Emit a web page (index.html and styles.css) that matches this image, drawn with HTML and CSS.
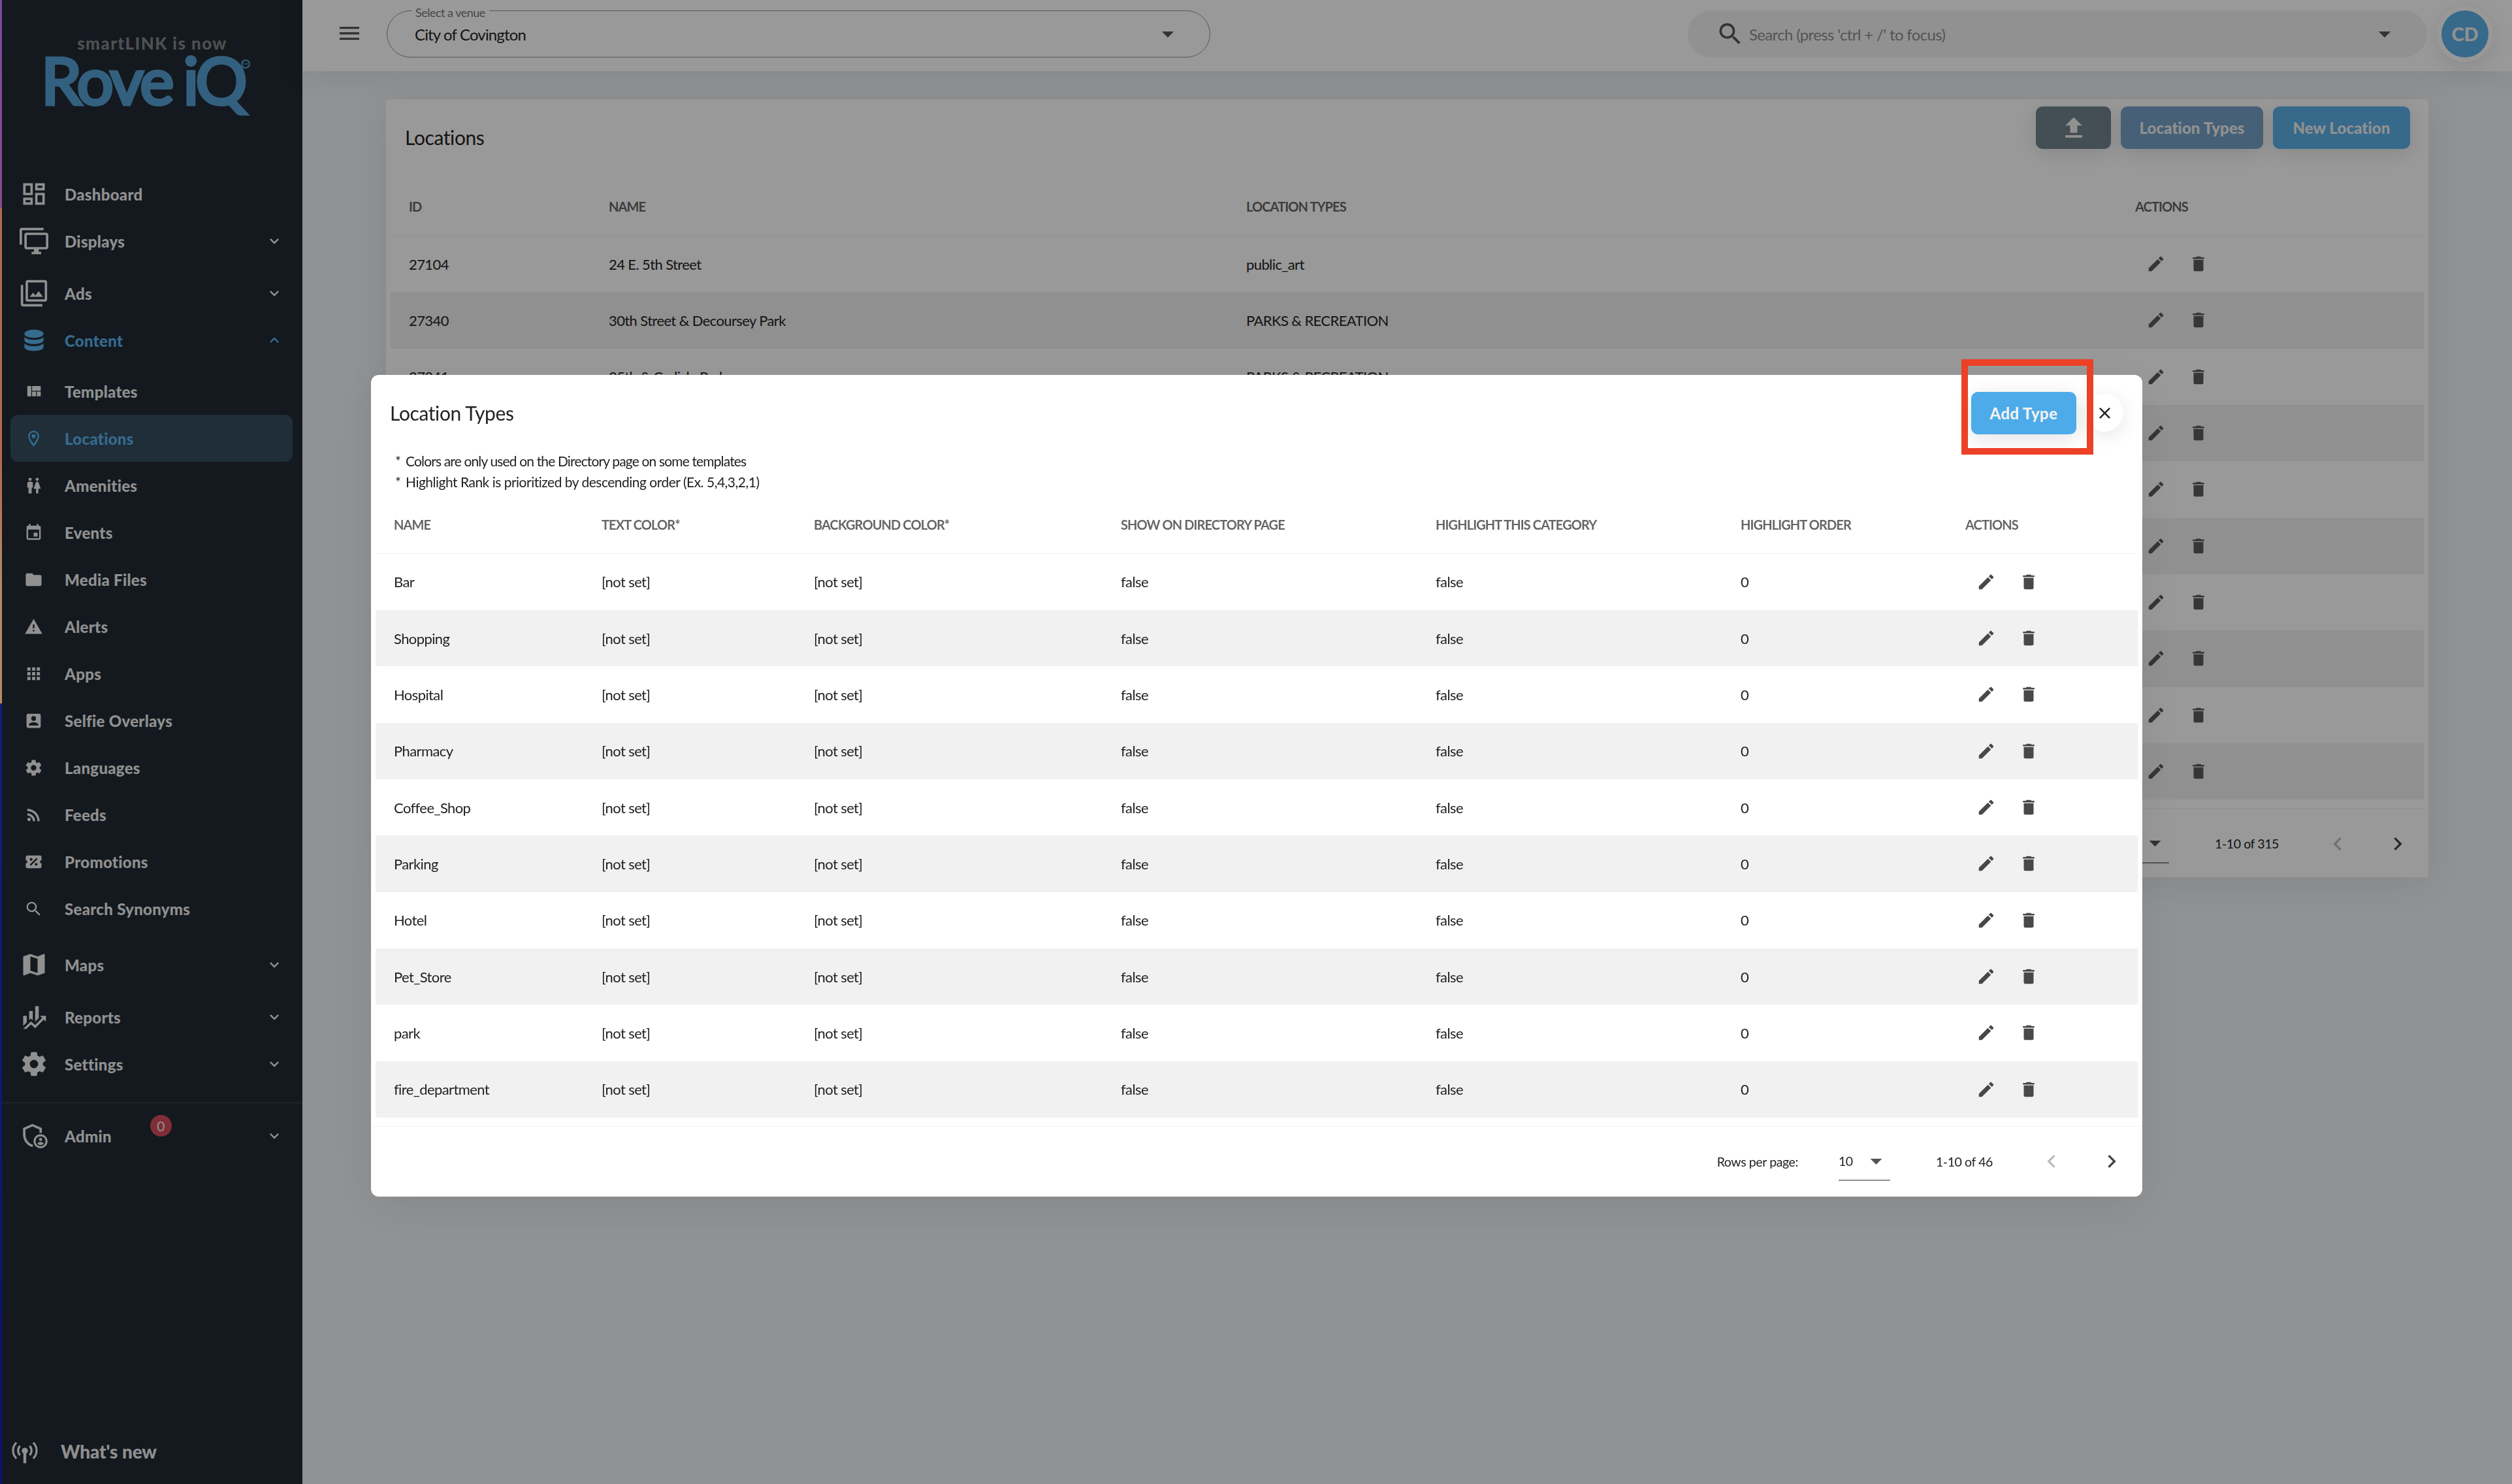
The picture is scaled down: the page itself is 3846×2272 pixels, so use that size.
FILE: index.html
```html
<!DOCTYPE html>
<html lang="en">
<head>
    <meta charset="UTF-8">
    <meta name="viewport" content="width=device-width, initial-scale=1.0">
    <title>Locations</title>
    <link rel="stylesheet" href="styles.css">
</head>
<body>
    <!-- icon sprite -->
    <svg class="sprite" width="0" height="0">
        <symbol id="i-dashboard" viewBox="0 0 24 24"><path d="M19 5v2h-4V5h4M9 5v6H5V5h4m10 8v6h-4v-6h4M9 17v2H5v-2h4M21 3h-8v6h8V3zM11 3H3v10h8V3zm10 8h-8v10h8V11zm-10 4H3v6h8v-6z"/></symbol>
        <symbol id="i-displays" viewBox="0 0 24 24"><path d="M22,17V7H6V17H22M22,5A2,2 0 0,1 24,7V17C24,18.11 23.1,19 22,19H16V21H18V23H10V21H12V19H6C4.89,19 4,18.11 4,17V7A2,2 0 0,1 6,5H22M2,3V15H0V3A2,2 0 0,1 2,1H20V3H2Z"/></symbol>
        <symbol id="i-ads" viewBox="0 0 24 24"><path d="M21,17H7V3H21M21,1H7A2,2 0 0,0 5,3V17A2,2 0 0,0 7,19H21A2,2 0 0,0 23,17V3A2,2 0 0,0 21,1M3,5H1V21A2,2 0 0,0 3,23H19V21H3M15.96,10.29L13.21,13.83L11.25,11.47L8.5,15H19.5L15.96,10.29Z"/></symbol>
        <symbol id="i-content" viewBox="0 0 24 24"><path d="M4 6.6C4 4.5 7.6 3.1 12 3.1s8 1.400 8 3.500S16.400 10 12 10 4 8.700 4 6.600zM4 9.300c1.700 1.600 4.700 2.300 8 2.300s6.300-.7 8-2.300v2.500c0 2-3.600 3.300-8 3.300s-8-1.300-8-3.300zM4 14.600c1.700 1.600 4.700 2.300 8 2.300s6.300-.7 8-2.300v3c0 2-3.600 3.300-8 3.300s-8-1.300-8-3.300z"/></symbol>
        <symbol id="i-templates" viewBox="0 0 24 24"><path d="M10,5V11H21V5M16,18H21V12H16M4,18H9V5H4M10,18H15V12H10V18Z"/></symbol>
        <symbol id="i-locations" viewBox="0 0 24 24"><path d="M12,6.5A2.5,2.5 0 0,1 14.5,9A2.5,2.5 0 0,1 12,11.5A2.5,2.5 0 0,1 9.5,9A2.5,2.5 0 0,1 12,6.5M12,2A7,7 0 0,1 19,9C19,14.25 12,22 12,22C12,22 5,14.25 5,9A7,7 0 0,1 12,2M12,4A5,5 0 0,0 7,9C7,10 7,12 12,18.71C17,12 17,10 17,9A5,5 0 0,0 12,4Z"/></symbol>
        <symbol id="i-amenities" viewBox="0 0 24 24"><path d="M7.5,2A2,2 0 0,1 9.5,4A2,2 0 0,1 7.5,6A2,2 0 0,1 5.5,4A2,2 0 0,1 7.5,2M6,7H9A2,2 0 0,1 11,9V14.5H9.5V22H5.5V14.5H4V9A2,2 0 0,1 6,7M16.5,2A2,2 0 0,1 18.5,4A2,2 0 0,1 16.5,6A2,2 0 0,1 14.5,4A2,2 0 0,1 16.5,2M15,22V16H12L14.59,8.41C14.84,7.59 15.6,7 16.5,7C17.4,7 18.16,7.59 18.41,8.41L21,16H18V22H15Z"/></symbol>
        <symbol id="i-events" viewBox="0 0 24 24"><path d="M19,19H5V8H19M16,1V3H8V1H6V3H5C3.89,3 3,3.89 3,5V19A2,2 0 0,0 5,21H19A2,2 0 0,0 21,19V5C21,3.89 20.1,3 19,3H18V1M17,12H12V17H17V12Z"/></symbol>
        <symbol id="i-media" viewBox="0 0 24 24"><path d="M10,4H4C2.89,4 2,4.89 2,6V18A2,2 0 0,0 4,20H20A2,2 0 0,0 22,18V8C22,6.89 21.1,6 20,6H12L10,4Z"/></symbol>
        <symbol id="i-alerts" viewBox="0 0 24 24"><path d="M13 14H11V9H13M13 18H11V16H13M1 21H23L12 2L1 21Z"/></symbol>
        <symbol id="i-apps" viewBox="0 0 24 24"><path d="M16,20H20V16H16M16,14H20V10H16M10,8H14V4H10M16,8H20V4H16M10,14H14V10H10M4,14H8V10H4M4,20H8V16H4M10,20H14V16H10M4,8H8V4H4V8Z"/></symbol>
        <symbol id="i-selfie" viewBox="0 0 24 24"><path d="M6,17C6,15 10,13.9 12,13.9C14,13.9 18,15 18,17V18H6M15,9A3,3 0 0,1 12,12A3,3 0 0,1 9,9A3,3 0 0,1 12,6A3,3 0 0,1 15,9M3,5V19A2,2 0 0,0 5,21H19A2,2 0 0,0 21,19V5A2,2 0 0,0 19,3H5C3.89,3 3,3.9 3,5Z"/></symbol>
        <symbol id="i-cog" viewBox="0 0 24 24"><path d="M12,15.5A3.5,3.5 0 0,1 8.5,12A3.5,3.5 0 0,1 12,8.5A3.5,3.5 0 0,1 15.5,12A3.5,3.5 0 0,1 12,15.5M19.43,12.97C19.47,12.65 19.5,12.33 19.5,12C19.5,11.67 19.47,11.34 19.43,11L21.54,9.37C21.73,9.22 21.78,8.95 21.66,8.73L19.66,5.27C19.54,5.05 19.27,4.96 19.05,5.05L16.56,6.05C16.04,5.66 15.5,5.32 14.87,5.07L14.5,2.42C14.46,2.18 14.25,2 14,2H10C9.75,2 9.54,2.18 9.5,2.42L9.13,5.07C8.5,5.32 7.96,5.66 7.44,6.05L4.95,5.05C4.73,4.96 4.46,5.05 4.34,5.27L2.34,8.73C2.21,8.95 2.27,9.22 2.46,9.37L4.57,11C4.53,11.34 4.5,11.67 4.5,12C4.5,12.33 4.53,12.65 4.57,12.97L2.46,14.63C2.27,14.78 2.21,15.05 2.34,15.27L4.34,18.73C4.46,18.95 4.73,19.03 4.95,18.95L7.44,17.94C7.96,18.34 8.5,18.68 9.13,18.93L9.5,21.58C9.54,21.82 9.75,22 10,22H14C14.25,22 14.46,21.82 14.5,21.58L14.87,18.93C15.5,18.67 16.04,18.34 16.56,17.94L19.05,18.95C19.27,19.03 19.54,18.95 19.66,18.73L21.66,15.27C21.78,15.05 21.73,14.78 21.54,14.63L19.43,12.97Z"/></symbol>
        <symbol id="i-feeds" viewBox="0 0 24 24"><path d="M6.18,15.64A2.18,2.18 0 0,1 8.36,17.82C8.36,19 7.38,20 6.18,20C5,20 4,19 4,17.82A2.18,2.18 0 0,1 6.18,15.64M4,4.44A15.56,15.56 0 0,1 19.56,20H16.73A12.73,12.73 0 0,0 4,7.27V4.44M4,10.1A9.9,9.9 0 0,1 13.9,20H11.07A7.07,7.07 0 0,0 4,12.93V10.1Z"/></symbol>
        <symbol id="i-promotions" viewBox="0 0 24 24"><path d="M4,4A2,2 0 0,0 2,6V10A2,2 0 0,1 4,12A2,2 0 0,1 2,14V18A2,2 0 0,0 4,20H20A2,2 0 0,0 22,18V14A2,2 0 0,1 20,12A2,2 0 0,1 22,10V6A2,2 0 0,0 20,4H4M15.5,7L17,8.5L8.5,17L7,15.5L15.5,7M8.81,7.04C9.79,7.04 10.58,7.83 10.58,8.81A1.77,1.77 0 0,1 8.81,10.58C7.83,10.58 7.04,9.79 7.04,8.81A1.77,1.77 0 0,1 8.81,7.04M15.19,13.42C16.17,13.42 16.96,14.21 16.96,15.19A1.77,1.77 0 0,1 15.19,16.96C14.21,16.96 13.42,16.17 13.42,15.19A1.77,1.77 0 0,1 15.19,13.42Z"/></symbol>
        <symbol id="i-search" viewBox="0 0 24 24"><path d="M9.5,3A6.5,6.5 0 0,1 16,9.5C16,11.11 15.41,12.59 14.44,13.73L14.71,14H15.5L20.5,19L19,20.5L14,15.5V14.71L13.73,14.44C12.59,15.41 11.11,16 9.5,16A6.5,6.5 0 0,1 3,9.5A6.5,6.5 0 0,1 9.5,3M9.5,5C7,5 5,7 5,9.5C5,12 7,14 9.5,14C12,14 14,12 14,9.5C14,7 12,5 9.5,5Z"/></symbol>
        <symbol id="i-maps" viewBox="0 0 24 24"><path d="M20.5 3l-.16.03L15 5.1 9 3 3.36 4.9c-.21.07-.36.25-.36.48V20.5c0 .28.22.5.5.5l.16-.03L9 18.900l6 2.100 5.640-1.900c.21-.07.36-.25.36-.48V3.500c0-.28-.22-.5-.5-.5zM15 19l-6-2.110V5l6 2.110V19z"/></symbol>
        <symbol id="i-reports" viewBox="0 0 24 24"><path d="M6,16.5L3,19.44V11H6M11,14.66L9.43,13.32L8,14.64V7H11M16,13L13,16V3H16M18.81,12.81L17,11H22V16L20.21,14.21L13,21.36L9.53,18.34L5.75,22H3L9.47,15.66L13,18.64"/></symbol>
        <symbol id="i-admin" viewBox="0 0 24 24"><path d="M17.600 9.500V6.100L10.700 3.100L3.900 6.100V10.800C3.900 15.300 6.600 19.200 11 20.400" fill="none" stroke="currentColor" stroke-width="2"/><circle cx="17.500" cy="16.500" r="5" fill="none" stroke="currentColor" stroke-width="1.700"/><circle cx="17.500" cy="15" r="1.300"/><path d="M14.800 18.400C15.500 17.400 16.500 17 17.500 17s2 .4 2.700 1.400C19.500 19.300 18.500 19.700 17.500 19.700s-2-.4-2.700-1.300z"/></symbol>
        <symbol id="i-news" viewBox="0 0 24 24"><circle cx="12" cy="11.500" r="2.800"/><path d="M10.700 12h2.600v11h-2.600z"/><path d="M7.600 7a6 6 0 0 0 0 8.500M16.400 7a6 6 0 0 1 0 8.500M4.300 4a10 10 0 0 0 0 14.500M19.700 4a10 10 0 0 1 0 14.500" fill="none" stroke="currentColor" stroke-width="1.900"/></symbol>
        <symbol id="i-chevron" viewBox="0 0 24 24"><path d="M7.41,8.58L12,13.17L16.59,8.58L18,10L12,16L6,10L7.41,8.58Z"/></symbol>
        <symbol id="i-left" viewBox="0 0 24 24"><path d="M15.41,16.58L10.83,12L15.41,7.41L14,6L8,12L14,18L15.41,16.58Z"/></symbol>
        <symbol id="i-right" viewBox="0 0 24 24"><path d="M8.59,16.58L13.17,12L8.59,7.41L10,6L16,12L10,18L8.59,16.58Z"/></symbol>
        <symbol id="i-arrow" viewBox="0 0 24 24"><path d="M7,10L12,15L17,10H7Z"/></symbol>
        <symbol id="i-menu" viewBox="0 0 24 24"><path d="M3,6H21V8H3V6M3,11H21V13H3V11M3,16H21V18H3V16Z"/></symbol>
        <symbol id="i-upload" viewBox="0 0 24 24"><path d="M9,16V10H5L12,3L19,10H15V16H9M5,20V18H19V20H5Z"/></symbol>
        <symbol id="i-close" viewBox="0 0 24 24"><path d="M19,6.41L17.59,5L12,10.59L6.41,5L5,6.41L10.59,12L5,17.59L6.41,19L12,13.41L17.59,19L19,17.59L13.41,12L19,6.41Z"/></symbol>
        <symbol id="i-pencil" viewBox="0 0 24 24"><path d="M20.71,7.04C21.1,6.65 21.1,6 20.71,5.63L18.37,3.29C18,2.9 17.35,2.9 16.96,3.29L15.12,5.12L18.87,8.87M3,17.25V21H6.75L17.81,9.93L14.06,6.18L3,17.25Z"/></symbol>
        <symbol id="i-delete" viewBox="0 0 24 24"><path d="M19,4H15.5L14.5,3H9.5L8.5,4H5V6H19M6,19A2,2 0 0,0 8,21H16A2,2 0 0,0 18,19V7H6V19Z"/></symbol>
    </svg>

    <div class="app">
        <div class="edge"></div>

        <aside class="sidebar">
            <div class="logo">
                <div class="logo-note">smartLINK is now</div>
                <div class="logo-name">Rove<span class="logo-iq">iQ</span><sup>TM</sup></div>
            </div>
            <nav class="nav">
                <a class="item"><svg><use href="#i-dashboard"/></svg><span>Dashboard</span></a>
                <a class="item"><svg><use href="#i-displays"/></svg><span>Displays</span><svg class="chev"><use href="#i-chevron"/></svg></a>
                <a class="item gap"><svg><use href="#i-ads"/></svg><span>Ads</span><svg class="chev"><use href="#i-chevron"/></svg></a>
                <a class="item open"><svg><use href="#i-content"/></svg><span>Content</span><svg class="chev"><use href="#i-chevron"/></svg></a>
                <div class="sub">
                    <a class="item"><svg><use href="#i-templates"/></svg><span>Templates</span></a>
                    <a class="item active"><svg><use href="#i-locations"/></svg><span>Locations</span></a>
                    <a class="item"><svg><use href="#i-amenities"/></svg><span>Amenities</span></a>
                    <a class="item"><svg><use href="#i-events"/></svg><span>Events</span></a>
                    <a class="item"><svg><use href="#i-media"/></svg><span>Media Files</span></a>
                    <a class="item"><svg><use href="#i-alerts"/></svg><span>Alerts</span></a>
                    <a class="item"><svg><use href="#i-apps"/></svg><span>Apps</span></a>
                    <a class="item"><svg><use href="#i-selfie"/></svg><span>Selfie Overlays</span></a>
                    <a class="item"><svg><use href="#i-cog"/></svg><span>Languages</span></a>
                    <a class="item"><svg><use href="#i-feeds"/></svg><span>Feeds</span></a>
                    <a class="item"><svg><use href="#i-promotions"/></svg><span>Promotions</span></a>
                    <a class="item"><svg><use href="#i-search"/></svg><span>Search Synonyms</span></a>
                </div>
                <a class="item"><svg><use href="#i-maps"/></svg><span>Maps</span><svg class="chev"><use href="#i-chevron"/></svg></a>
                <a class="item gap"><svg><use href="#i-reports"/></svg><span>Reports</span><svg class="chev"><use href="#i-chevron"/></svg></a>
                <a class="item"><svg><use href="#i-cog"/></svg><span>Settings</span><svg class="chev"><use href="#i-chevron"/></svg></a>
                <div class="divider"></div>
                <a class="item"><svg><use href="#i-admin"/></svg><span>Admin</span><b class="badge">0</b><svg class="chev"><use href="#i-chevron"/></svg></a>
            </nav>
            <a class="news"><svg><use href="#i-news"/></svg><span>What's new</span></a>
        </aside>

        <div class="main">
            <header class="topbar">
                <svg class="menu"><use href="#i-menu"/></svg>
                <div class="venue">
                    <label>Select a venue</label>
                    <span>City of Covington</span>
                    <svg><use href="#i-arrow"/></svg>
                </div>
                <div class="search">
                    <svg class="glass"><use href="#i-search"/></svg>
                    <span>Search (press 'ctrl + /' to focus)</span>
                    <svg class="arrow"><use href="#i-arrow"/></svg>
                </div>
                <div class="avatar">CD</div>
            </header>

            <section class="card">
                <div class="card-head">
                    <h2>Locations</h2>
                    <button class="btn btn-upload"><svg><use href="#i-upload"/></svg></button>
                    <button class="btn btn-types">Location Types</button>
                    <button class="btn btn-new">New Location</button>
                </div>
                <div class="table locations">
                    <div class="row head"><span>ID</span><span>NAME</span><span>LOCATION TYPES</span><span>ACTIONS</span></div>
                    <div id="locationRows"></div>
                </div>
                <div class="pager">
                    <span class="rpp">Rows per page:</span>
                    <div class="size"><span>10</span><svg><use href="#i-arrow"/></svg></div>
                    <span class="range">1-10 of 315</span>
                    <svg class="prev"><use href="#i-left"/></svg>
                    <svg class="next"><use href="#i-right"/></svg>
                </div>
            </section>
        </div>
    </div>

    <div class="overlay">
        <div class="modal">
            <div class="modal-head">
                <h2>Location Types</h2>
                <div class="add-wrap">
                    <button class="btn btn-add">Add Type</button>
                    <div class="marker"></div>
                </div>
                <button class="close"><svg><use href="#i-close"/></svg></button>
            </div>
            <div class="notes">
                <p class="note-colors"><i>*</i>Colors are only used on the Directory page on some templates</p>
                <p><i>*</i>Highlight Rank is prioritized by descending order (Ex. 5,4,3,2,1)</p>
            </div>
            <div class="table types">
                <div class="row head"><span>NAME</span><span>TEXT COLOR*</span><span>BACKGROUND COLOR*</span><span>SHOW ON DIRECTORY PAGE</span><span>HIGHLIGHT THIS CATEGORY</span><span>HIGHLIGHT ORDER</span><span>ACTIONS</span></div>
                <div id="typeRows"></div>
            </div>
            <div class="pager">
                <span class="rpp">Rows per page:</span>
                <div class="size"><span>10</span><svg><use href="#i-arrow"/></svg></div>
                <span class="range">1-10 of 46</span>
                <svg class="prev"><use href="#i-left"/></svg>
                <svg class="next"><use href="#i-right"/></svg>
            </div>
        </div>
    </div>

    <script src="app.js"></script>
</body>
</html>
```

FILE: app.js
```js
const locations = [
    ['27104', '24 E. 5th Street', 'public_art'],
    ['27340', '30th Street & Decoursey Park', 'PARKS & RECREATION'],
    ['27341', '35th & Carlisle Park', 'PARKS & RECREATION'],
    ['', '', ''],
    ['', '', ''],
    ['', '', ''],
    ['', '', ''],
    ['', '', ''],
    ['', '', ''],
    ['', '', '']
];

const types = ['Bar', 'Shopping', 'Hospital', 'Pharmacy', 'Coffee_Shop', 'Parking', 'Hotel', 'Pet_Store', 'park', 'fire_department'];

const actions = '<span class="actions"><svg><use href="#i-pencil"/></svg><svg><use href="#i-delete"/></svg></span>';

function renderRows(id, rows) {
    document.getElementById(id).innerHTML = rows.map(function(cells) {
        return '<div class="row">' + cells.map(function(text) {
            return '<span>' + text.replace('&', '&amp;') + '</span>';
        }).join('') + actions + '</div>';
    }).join('');
}

renderRows('locationRows', locations);
renderRows('typeRows', types.map(function(name) {
    return [name, '[not set]', '[not set]', 'false', 'false', '0'];
}));
```

FILE: styles.css
```css
* {
    box-sizing: border-box;
}

body {
    margin: 0;
    font-family: Lato, "Liberation Sans", sans-serif;
    font-size: 22px;
    color: #222;
    background-color: #f1f3f6;
    overflow: hidden;
}

svg {
    fill: currentColor;
    flex: none;
    display: block;
}

.sprite {
    position: absolute;
}

h2, p {
    margin: 0;
    font-weight: 400;
}

h2 {
    font-size: 30px;
    letter-spacing: -0.4px;
}

.app {
    display: flex;
    height: 2272px;
}

/* desktop showing past the window's left side */
.edge {
    width: 3px;
    background: linear-gradient(#7b4a9c 0, #8a4a90 319px, #b4694f 319px, #b4694f 700px, #b78b60 900px, #b78b60 1077px, #10207c 1077px, #0b1070 100%);
}

/* sidebar */
.sidebar {
    width: 460px;
    background-color: #212a34;
    color: #f0f0f0;
    display: flex;
    flex-direction: column;
}

.logo {
    height: 261px;
    padding-top: 49px;
    text-align: center;
}

.logo-note {
    font-size: 26px;
    line-height: 34px;
    font-weight: 900;
    letter-spacing: 1.4px;
    color: #858688;
}

.logo-name {
    font-size: 99px;
    line-height: 78px;
    padding-left: 60px;
    text-align: left;
    letter-spacing: -4px;
    white-space: nowrap;
    color: #58a0d4;
    -webkit-text-stroke: 5px #58a0d4;
}

.logo-iq {
    margin-left: 18px;
}

.logo-name sup {
    display: inline-block;
    width: 14px;
    height: 14px;
    margin-left: -6px;
    border: 2px solid #58a0d4;
    border-radius: 50%;
    font-size: 6px;
    line-height: 10px;
    letter-spacing: 0;
    text-align: center;
    vertical-align: 60px;
    -webkit-text-stroke: 0;
}

.nav {
    flex: 1;
}

.item {
    height: 72px;
    display: flex;
    align-items: center;
    font-size: 24px;
    font-weight: 900;
    letter-spacing: 0.3px;
}

.item span {
    padding-left: 25px;
}

.item svg {
    width: 44px;
    height: 44px;
    margin-left: 27px;
}

.item .chev {
    width: 28px;
    height: 28px;
    margin: 0 29px 0 auto;
}

.gap {
    margin-top: 8px;
}

.open,
.active {
    color: #5cb2ee;
}

.open .chev {
    transform: rotate(180deg);
}

.sub {
    margin: 6px 15px 14px 13px;
}

.sub svg {
    width: 29px;
    height: 29px;
    margin-left: 21px;
}

.sub span {
    padding-left: 33px;
}

.active {
    background-color: #344d5f;
    border-radius: 12px;
}

.divider {
    height: 1px;
    margin: 23px 0 14px;
    background-color: #444b54;
}

.badge {
    width: 33px;
    height: 33px;
    margin: -31px 0 0 59px;
    border-radius: 50%;
    background-color: #d74b5d;
    font-size: 21px;
    line-height: 33px;
    font-weight: 400;
    text-align: center;
}

.news {
    height: 100px;
    display: flex;
    align-items: center;
    font-size: 28px;
    font-weight: 900;
    letter-spacing: -0.1px;
}

.news svg {
    width: 40px;
    height: 40px;
    margin: 0 35px 0 15px;
}

/* top bar */
.main {
    flex: 1;
}

.topbar {
    height: 109px;
    padding: 16px 36px 21px 50px;
    display: flex;
    background-color: #fff;
    box-shadow: 0 8px 48px rgba(0, 0, 0, 0.08);
}

.menu {
    width: 40px;
    height: 40px;
    margin-top: 15px;
    margin-left: 2px;
    color: #555;
}

.venue {
    position: relative;
    width: 1261px;
    height: 72px;
    margin-left: 37px;
    padding: 0 42px;
    display: flex;
    align-items: center;
    justify-content: space-between;
    border: 1px solid #909090;
    border-radius: 36px;
    font-size: 24px;
    letter-spacing: -0.85px;
}

.venue label {
    position: absolute;
    left: 37px;
    top: -10px;
    padding: 0 6px;
    background-color: #fff;
    color: #777;
    font-size: 18px;
    line-height: 24px;
    letter-spacing: -0.5px;
}

.venue svg,
.search .arrow {
    width: 44px;
    height: 44px;
    color: #555;
}

.search {
    width: 1132px;
    height: 72px;
    margin-left: auto;
    padding: 0 43px;
    display: flex;
    align-items: center;
    border-radius: 36px;
    background-color: #f2f2f2;
    font-size: 24px;
    letter-spacing: -0.65px;
    color: #8c8c8c;
}

.glass {
    width: 44px;
    height: 44px;
    margin-right: 7px;
    color: #555;
}

.search .arrow {
    margin-left: auto;
}

.avatar {
    width: 72px;
    height: 72px;
    margin-left: 22px;
    border-radius: 50%;
    background-color: #5cb0e6;
    box-shadow: 0 0 0 7px #fdfdfd, 0 8px 30px 6px rgba(0, 0, 0, 0.1);
    color: #f2f2f2;
    font-size: 29px;
    line-height: 72px;
    font-weight: 900;
    text-align: center;
}

/* cards and tables */
.card {
    width: 3127px;
    height: 1191px;
    margin: 43px 0 0 128px;
    border-radius: 4px;
    background-color: #fff;
    box-shadow: 0 8px 60px rgba(0, 0, 0, 0.08);
}

.card-head {
    height: 119px;
    padding: 11px 28px 0 29px;
    display: flex;
    gap: 15px;
}

.card-head h2 {
    margin-right: auto;
    line-height: 94px;
}

.btn {
    height: 65px;
    padding: 0;
    border: none;
    border-radius: 10px;
    box-shadow: 0 6px 30px rgba(0, 0, 0, 0.12);
    color: #f2f2f2;
    font-family: inherit;
    font-size: 24px;
    font-weight: 900;
    letter-spacing: 0.1px;
}

.btn svg {
    width: 44px;
    height: 44px;
    margin: auto;
}

.btn-upload {
    width: 115px;
    background-color: #71848e;
}

.btn-types {
    width: 218px;
    background-color: #75a0c6;
}

.btn-new {
    width: 210px;
    background-color: #5cb0e6;
}

.table {
    margin: 0 7px;
    letter-spacing: -0.6px;
}

.row {
    height: 86.33px;
    padding-left: 28px;
    display: grid;
    align-items: center;
}

.row:nth-child(even) {
    background-color: #f1f1f1;
}

.head {
    border-bottom: 1px solid #efefef;
    font-size: 20px;
    font-weight: 700;
    letter-spacing: -0.9px;
    color: #666;
}

.locations .row {
    grid-template-columns: 306px 976px 1361px 1fr;
}

.locations .head {
    height: 90px;
}

.types .row {
    grid-template-columns: 318px 325px 470px 482px 467px 344px 1fr;
}

.actions {
    display: flex;
    gap: 35px;
    padding-left: 17px;
    color: #484848;
}

.locations .actions {
    color: #5a5a5a;
}

.actions svg {
    width: 30px;
    height: 30px;
}

.pager {
    height: 108px;
    margin-top: 13px;
    padding-right: 27px;
    display: flex;
    align-items: center;
    justify-content: flex-end;
    border-top: 1px solid #f0f0f0;
    font-size: 19.5px;
    letter-spacing: -0.4px;
}

.size {
    width: 79px;
    height: 60px;
    margin: 0 70px 0 62px;
    display: flex;
    align-items: center;
    justify-content: space-between;
    border-bottom: 2px solid #909090;
}

.size svg {
    width: 43px;
    height: 43px;
    color: #555;
}

.prev,
.next {
    width: 40px;
    height: 40px;
    color: #444;
}

.prev {
    margin: 0 52px 0 70px;
    color: #bbb;
}

/* location types dialog */
.overlay {
    position: fixed;
    top: 0;
    left: 3px;
    right: 0;
    bottom: 0;
    background-color: rgba(0, 0, 0, 0.4);
}

.modal {
    width: 2712px;
    height: 1258px;
    margin: 574px 0 0 565px;
    border-radius: 12px;
    background-color: #fff;
    box-shadow: 0 16px 80px rgba(0, 0, 0, 0.08);
}

.modal-head {
    height: 116px;
    padding: 0 29px;
    display: flex;
    align-items: center;
}

.add-wrap {
    position: relative;
    margin: 0 14px 0 auto;
}

.btn-add {
    display: block;
    width: 161px;
    background-color: #4dabe9;
    letter-spacing: 0.4px;
}

/* red callout round the button */
.marker {
    position: absolute;
    left: -15px;
    top: -50px;
    width: 202px;
    height: 146px;
    border: 10px solid #ec4027;
}

.close {
    width: 58px;
    height: 58px;
    padding: 0;
    border: none;
    border-radius: 50%;
    background-color: #fff;
    box-shadow: 0 6px 30px rgba(0, 0, 0, 0.1);
    color: #222;
}

.close svg {
    width: 29px;
    height: 29px;
    margin: auto;
}

.notes {
    padding: 0 37px;
    font-size: 21px;
    line-height: 32px;
    letter-spacing: -0.5px;
}

.note-colors {
    letter-spacing: -0.85px;
}

.notes i {
    display: inline-block;
    width: 16px;
    font-style: normal;
}

.types .head {
    height: 93.67px;
    padding-top: 6px;
}
```
